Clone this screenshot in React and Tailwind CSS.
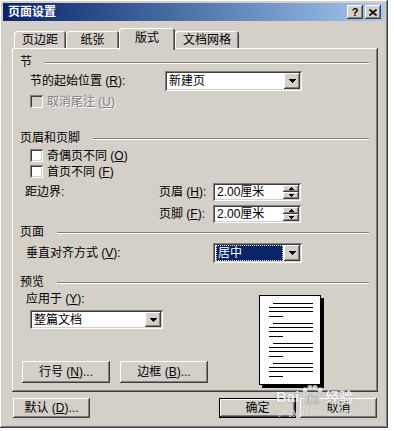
import React from "react";

// classic 3D bevels
const raised =
  "shadow-[inset_-1px_-1px_#404040,inset_1px_1px_#ffffff,inset_-2px_-2px_#808080,inset_2px_2px_#d4d0c8]";
const sunken =
  "shadow-[inset_1px_1px_#808080,inset_-1px_-1px_#ffffff,inset_2px_2px_#404040,inset_-2px_-2px_#d4d0c8]";

function Key({ k }) {
  return <span className="underline">{k}</span>;
}

function Down({ small }) {
  if (small) {
    return (
      <svg width="5" height="3" viewBox="0 0 5 3" shapeRendering="crispEdges">
        <path d="M0 0h5v1h-1v1h-1v1h-1v-1h-1v-1h-1z" fill="#000" />
      </svg>
    );
  }
  return (
    <svg width="7" height="4" viewBox="0 0 7 4" shapeRendering="crispEdges">
      <path d="M0 0h7v1h-1v1h-1v1h-1v1h-1v-1h-1v-1h-1v-1h-1z" fill="#000" />
    </svg>
  );
}

function Up() {
  return (
    <svg width="5" height="3" viewBox="0 0 5 3" shapeRendering="crispEdges">
      <path d="M2 0h1v1h1v1h1v1h-5v-1h1v-1h1z" fill="#000" />
    </svg>
  );
}

function Section({ title }) {
  return (
    <div className="flex items-center gap-[13px] h-[14px]">
      <span>{title}</span>
      <div className="flex-1 mt-[1px] border-t border-t-[#808080] border-b border-b-white" />
    </div>
  );
}

function Check({ label, disabled, className = "" }) {
  return (
    <div className={`flex items-center h-[13px] ml-[10px] gap-[4px] ${className}`}>
      <div className={`w-[13px] h-[13px] ${sunken} ${disabled ? "bg-[#d4d0c8]" : "bg-white"}`} />
      <span className={disabled ? "text-[#808080] [text-shadow:1px_1px_0_#ffffff]" : ""}>{label}</span>
    </div>
  );
}

function Combo({ className, text, selected }) {
  return (
    <div className={`flex p-[2px] bg-white ${sunken} ${className}`}>
      <div className="flex-1 flex items-center pl-[1px] pr-[1px]">
        {selected ? (
          <div className="w-full h-full flex items-center bg-[#0a246a] text-white border border-dotted border-[#e8e8b0] pl-[1px]">
            {text}
          </div>
        ) : (
          <span className="pl-[1px]">{text}</span>
        )}
      </div>
      <div className={`w-[16px] h-full bg-[#d4d0c8] ${raised} flex items-center justify-center`}>
        <Down />
      </div>
    </div>
  );
}

function Spin({ value }) {
  return (
    <div className={`w-[88px] h-[18px] p-[2px] bg-white flex ${sunken}`}>
      <div className="flex-1 flex items-center pl-[2px]">{value}</div>
      <div className="w-[16px] flex flex-col">
        <div className={`flex-1 bg-[#d4d0c8] ${raised} flex items-center justify-center`}>
          <Up />
        </div>
        <div className={`flex-1 bg-[#d4d0c8] ${raised} flex items-center justify-center`}>
          <Down small />
        </div>
      </div>
    </div>
  );
}

function Btn({ className, children, def }) {
  return (
    <div
      className={`bg-[#d4d0c8] ${raised} flex items-center justify-center ${
        def ? "border border-black" : ""
      } ${className}`}
    >
      {children}
    </div>
  );
}

function Tab({ label, active, className }) {
  if (active) {
    return (
      <div
        className={`relative z-10 h-[22px] mb-[-2px] bg-[#d4d0c8] rounded-t-[3px] shadow-[inset_1px_1px_#ffffff,inset_-1px_0_#404040,inset_-2px_0_#808080] flex justify-center pt-[3px] ${className}`}
      >
        {label}
      </div>
    );
  }
  return (
    <div
      className={`h-[17px] bg-[#d4d0c8] rounded-t-[3px] shadow-[inset_1px_1px_#ffffff,inset_-1px_0_#404040,inset_-2px_0_#808080] flex justify-center pt-[2px] ${className}`}
    >
      {label}
    </div>
  );
}

function PageLines() {
  const groups = [0, 1, 2, 3];
  return (
    <div className="flex flex-col pt-[7px] pl-[9px]">
      {groups.map((g) => (
        <div key={g} className="flex flex-col mb-[6px]">
          <div className="ml-[4px] w-[40px] h-[1px] bg-black" />
          <div className="mt-[3px] w-[44px] h-[1px] bg-black" />
          <div className="mt-[3px] w-[44px] h-[1px] bg-black" />
          <div className="mt-[4px] w-[14px] h-[1px] bg-black" />
        </div>
      ))}
    </div>
  );
}

export default function App() {
  return (
    <div className="relative w-[394px] h-[431px] bg-white text-black text-[12px] leading-[14px] font-['Liberation_Sans','Noto_Sans_CJK_SC',sans-serif]">
      <div className={`w-[388px] h-[428px] bg-[#d4d0c8] p-[3px] flex flex-col ${raised}`}>
        {/* title bar */}
        <div className="h-[18px] bg-linear-to-r from-[#0a246a] to-[#a6caf0] flex items-center pl-[5px] pr-[4px]">
          <span className="text-white font-bold">页面设置</span>
          <div className="ml-auto flex gap-[2px]">
            <Btn className="w-[16px] h-[14px] text-[11px] font-bold leading-none">?</Btn>
            <Btn className="w-[16px] h-[14px]">
              <svg width="8" height="7" viewBox="0 0 8 7">
                <path d="M0.5 0.5 L7.5 6.5 M7.5 0.5 L0.5 6.5" stroke="#000" strokeWidth="1.6" />
              </svg>
            </Btn>
          </div>
        </div>

        <div className="flex flex-col pl-[9px] pr-[7px]">
          {/* tabs */}
          <div className="mt-[7px] h-[20px] flex items-end pl-[2px]">
            <Tab label="页边距" className="w-[52px]" />
            <Tab label="纸张" className="w-[53px]" />
            <Tab label="版式" active className="w-[56px]" />
            <Tab label="文档网格" className="w-[64px]" />
          </div>

          {/* panel */}
          <div className={`h-[344px] bg-[#d4d0c8] ${raised} flex flex-col pt-[7px] pl-[8px] pr-[9px]`}>
            <Section title="节" />
            <div className="mt-[2px] h-[20px] flex items-center ml-[10px]">
              <div className="w-[135px]">
                节的起始位置 (<Key k="R" />):
              </div>
              <Combo className="w-[137px] h-[20px]" text="新建页" />
            </div>
            <Check className="mt-[4px]" disabled label={<>取消尾注 (<Key k="U" />)</>} />

            <div className="mt-[23px]">
              <Section title="页眉和页脚" />
            </div>
            <Check className="mt-[4px]" label={<>奇偶页不同 (<Key k="O" />)</>} />
            <Check className="mt-[3px]" label={<>首页不同 (<Key k="F" />)</>} />
            <div className="mt-[5px] h-[18px] flex items-center ml-[5px]">
              <div className="w-[134px]">距边界:</div>
              <div className="w-[54px]">
                页眉 (<Key k="H" />):
              </div>
              <Spin value="2.00厘米" />
            </div>
            <div className="mt-[4px] h-[18px] flex items-center ml-[5px]">
              <div className="w-[134px]" />
              <div className="w-[54px]">
                页脚 (<Key k="F" />):
              </div>
              <Spin value="2.00厘米" />
            </div>

            <div className="mt-[2px]">
              <Section title="页面" />
            </div>
            <div className="mt-[4px] h-[20px] flex items-center ml-[6px]">
              <div className="w-[187px]">
                垂直对齐方式 (<Key k="V" />):
              </div>
              <Combo className="w-[89px] h-[20px]" text="居中" selected />
            </div>

            <div className="mt-[12px]">
              <Section title="预览" />
            </div>
            <div className="flex">
              <div className="w-[239px] flex flex-col">
                <div className="mt-[3px] h-[14px] ml-[6px]">
                  应用于 (<Key k="Y" />):
                </div>
                <Combo className="mt-[4px] ml-[10px] w-[133px] h-[19px]" text="整篇文档" />
                <div className="mt-[32px] ml-[2px] flex gap-[10px]">
                  <Btn className="w-[88px] h-[22px]">
                    行号 (<Key k="N" />)...
                  </Btn>
                  <Btn className="w-[88px] h-[22px]">
                    边框 (<Key k="B" />)...
                  </Btn>
                </div>
              </div>
              <div className="mt-[6px] w-[62px] h-[90px] bg-white border border-black shadow-[3px_3px_0_#000]">
                <PageLines />
              </div>
            </div>
          </div>

          {/* bottom buttons */}
          <div className="mt-[6px] flex">
            <Btn className="ml-[1px] w-[77px] h-[20px]">
              默认 (<Key k="D" />)...
            </Btn>
            <div className="ml-auto mr-[1px] flex gap-[4px]">
              <Btn def className="w-[77px] h-[20px]">确定</Btn>
              <Btn className="w-[77px] h-[20px]">取消</Btn>
            </div>
          </div>
        </div>
      </div>

      {/* watermark */}
      <div className="absolute left-[276px] top-[385px] flex items-end text-white opacity-80 pointer-events-none [text-shadow:0_0_2px_#8a8a8a]">
        <span className="text-[15px] font-bold leading-[16px]">Bai</span>
        <svg width="24" height="20" viewBox="0 0 24 20" className="mx-[1px]">
          <circle cx="5" cy="5" r="2.5" fill="#fff" stroke="#aaa" strokeWidth="0.6" />
          <circle cx="10" cy="2.5" r="2.5" fill="#fff" stroke="#aaa" strokeWidth="0.6" />
          <circle cx="15" cy="2.5" r="2.5" fill="#fff" stroke="#aaa" strokeWidth="0.6" />
          <circle cx="20" cy="5" r="2.5" fill="#fff" stroke="#aaa" strokeWidth="0.6" />
          <text x="12" y="18" textAnchor="middle" fontSize="11" fontWeight="bold" fill="#fff" stroke="#aaa" strokeWidth="0.4">du</text>
        </svg>
        <span className="text-[14px] font-bold leading-[16px]">经验</span>
      </div>
      <div className="absolute left-[279px] top-[407px] text-[9px] leading-[10px] text-white opacity-80 pointer-events-none [text-shadow:0_0_1px_#777]">
        jingyan.baidu.com
      </div>
    </div>
  );
}
